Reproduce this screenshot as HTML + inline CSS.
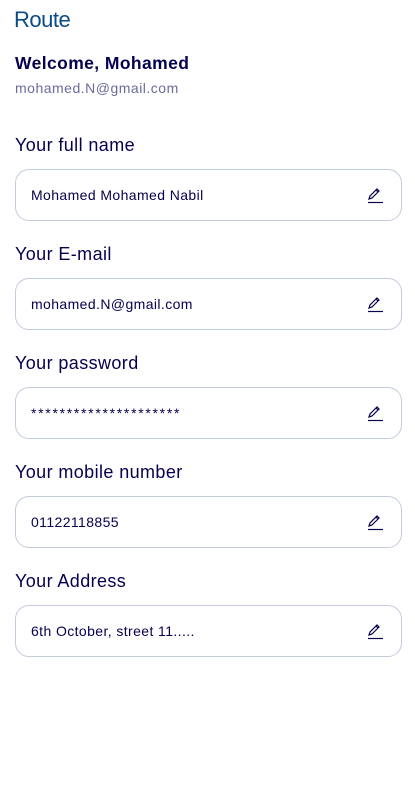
<!DOCTYPE html>
<html><head><style>
body{margin:0;width:415px;height:812px;background:#fff;font-family:"Liberation Sans",sans-serif;color:#06004F;position:relative;overflow:hidden}
.a{position:absolute}
.logo{left:14px;top:7px;font-size:22px;color:#0a4a8a;letter-spacing:-0.5px;font-weight:normal}
.lbl{left:15px;font-size:18px;letter-spacing:0.4px}
.f{left:15px;width:385px;height:50px;border:1px solid #c3cbdd;border-radius:14px}
.f span{position:absolute;left:15px;top:17px;font-size:14px;letter-spacing:0.4px}
.f svg{position:absolute;left:350px;top:16px}
</style></head><body>
<div class="a logo">Route</div>
<div class="a" style="left:15px;top:53px;font-size:17.5px;font-weight:bold;letter-spacing:0.4px">Welcome, Mohamed</div>
<div class="a" style="left:15px;top:80px;font-size:14px;color:#6b6b9a;letter-spacing:0.5px">mohamed.N@gmail.com</div>

<div class="a lbl" style="top:135px">Your full name</div>
<div class="a f" style="top:169px"><span>Mohamed Mohamed Nabil</span><svg width="18" height="18" viewBox="0 0 18 18" fill="none" stroke="#06004F" stroke-width="1.2"><path d="M3 13l1-3 7-7 2 2-7 7z M10 4l2 2"/><path d="M2 16.5h15"/></svg></div>

<div class="a lbl" style="top:244px">Your E-mail</div>
<div class="a f" style="top:278px"><span>mohamed.N@gmail.com</span><svg width="18" height="18" viewBox="0 0 18 18" fill="none" stroke="#06004F" stroke-width="1.2"><path d="M3 13l1-3 7-7 2 2-7 7z M10 4l2 2"/><path d="M2 16.5h15"/></svg></div>

<div class="a lbl" style="top:353px">Your password</div>
<div class="a f" style="top:387px"><span style="letter-spacing:1.7px">*********************</span><svg width="18" height="18" viewBox="0 0 18 18" fill="none" stroke="#06004F" stroke-width="1.2"><path d="M3 13l1-3 7-7 2 2-7 7z M10 4l2 2"/><path d="M2 16.5h15"/></svg></div>

<div class="a lbl" style="top:462px">Your mobile number</div>
<div class="a f" style="top:496px"><span>01122118855</span><svg width="18" height="18" viewBox="0 0 18 18" fill="none" stroke="#06004F" stroke-width="1.2"><path d="M3 13l1-3 7-7 2 2-7 7z M10 4l2 2"/><path d="M2 16.5h15"/></svg></div>

<div class="a lbl" style="top:571px">Your Address</div>
<div class="a f" style="top:605px"><span>6th October, street 11.....</span><svg width="18" height="18" viewBox="0 0 18 18" fill="none" stroke="#06004F" stroke-width="1.2"><path d="M3 13l1-3 7-7 2 2-7 7z M10 4l2 2"/><path d="M2 16.5h15"/></svg></div>
</body></html>
